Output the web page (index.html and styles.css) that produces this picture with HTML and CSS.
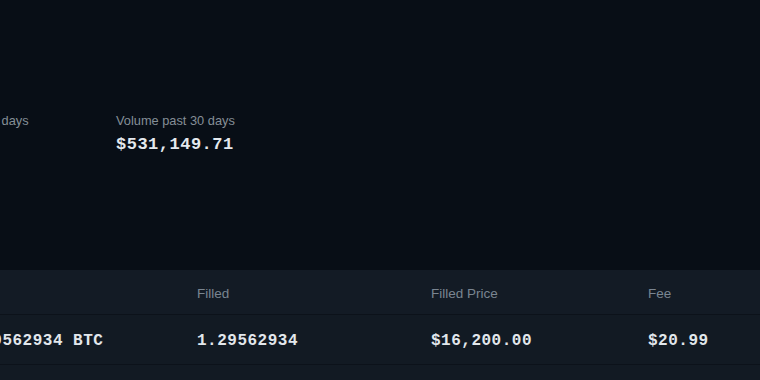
FILE: index.html
```html
<!DOCTYPE html>
<html lang="en">
<head>
<meta charset="utf-8">
<title>Order details</title>
<link rel="stylesheet" href="styles.css">
</head>
<body>
<div class="page">
  <section class="stats">
    <div class="stat">
      <div class="stat-label">Fees past 30 days</div>
      <div class="stat-value">$842.10</div>
    </div>
    <div class="stat">
      <div class="stat-label">Volume past 30 days</div>
      <div class="stat-value">$531,149.71</div>
    </div>
  </section>
  <section class="table">
    <div class="tr thead">
      <div class="td">Size</div>
      <div class="td">Filled</div>
      <div class="td">Filled Price</div>
      <div class="td">Fee</div>
    </div>
    <div class="tr trow">
      <div class="td">1.29562934 BTC</div>
      <div class="td">1.29562934</div>
      <div class="td">$16,200.00</div>
      <div class="td">$20.99</div>
    </div>
    <div class="tr trow">
      <div class="td">0.50000000 BTC</div>
      <div class="td">0.50000000</div>
      <div class="td">$16,180.00</div>
      <div class="td">$8.09</div>
    </div>
  </section>
</div>
</body>
</html>
```
FILE: styles.css
```css
html, body {
  margin: 0;
  padding: 0;
  background: #080e16;
}
body {
  font-family: "Liberation Sans", Arial, sans-serif;
  color: #e6ebf0;
}
.page {
  width: 760px;
  height: 380px;
  overflow: hidden;
}
.stats {
  display: flex;
  padding-top: 113px;
  margin-left: -76px;
  box-sizing: border-box;
  height: 270px;
}
.stat {
  width: 192px;
}
.stat-label {
  font-size: 12.8px;
  line-height: 16px;
  color: #858e97;
}
.stat-value {
  margin-top: 6px;
  font-family: "Liberation Mono", "DejaVu Sans Mono", monospace;
  font-weight: 700;
  font-size: 17px;
  letter-spacing: 0.5px;
  line-height: 20px;
  color: #e4e9ee;
}
.table {
  margin-left: -38px;
  background: #121a23;
}
.tr {
  display: grid;
  grid-template-columns: 235px 234px 217px 1fr;
  align-items: center;
  border-bottom: 1px solid #0c121a;
}
.thead {
  height: 45px;
  padding-top: 3px;
  box-sizing: border-box;
  font-size: 13.5px;
  color: #7a8591;
  background: #131b25;
}
.trow {
  height: 50px;
  padding-top: 3px;
  box-sizing: border-box;
  font-family: "Liberation Mono", "DejaVu Sans Mono", monospace;
  font-weight: 700;
  font-size: 16px;
  letter-spacing: 0.5px;
  color: #e2e7ec;
}
```
